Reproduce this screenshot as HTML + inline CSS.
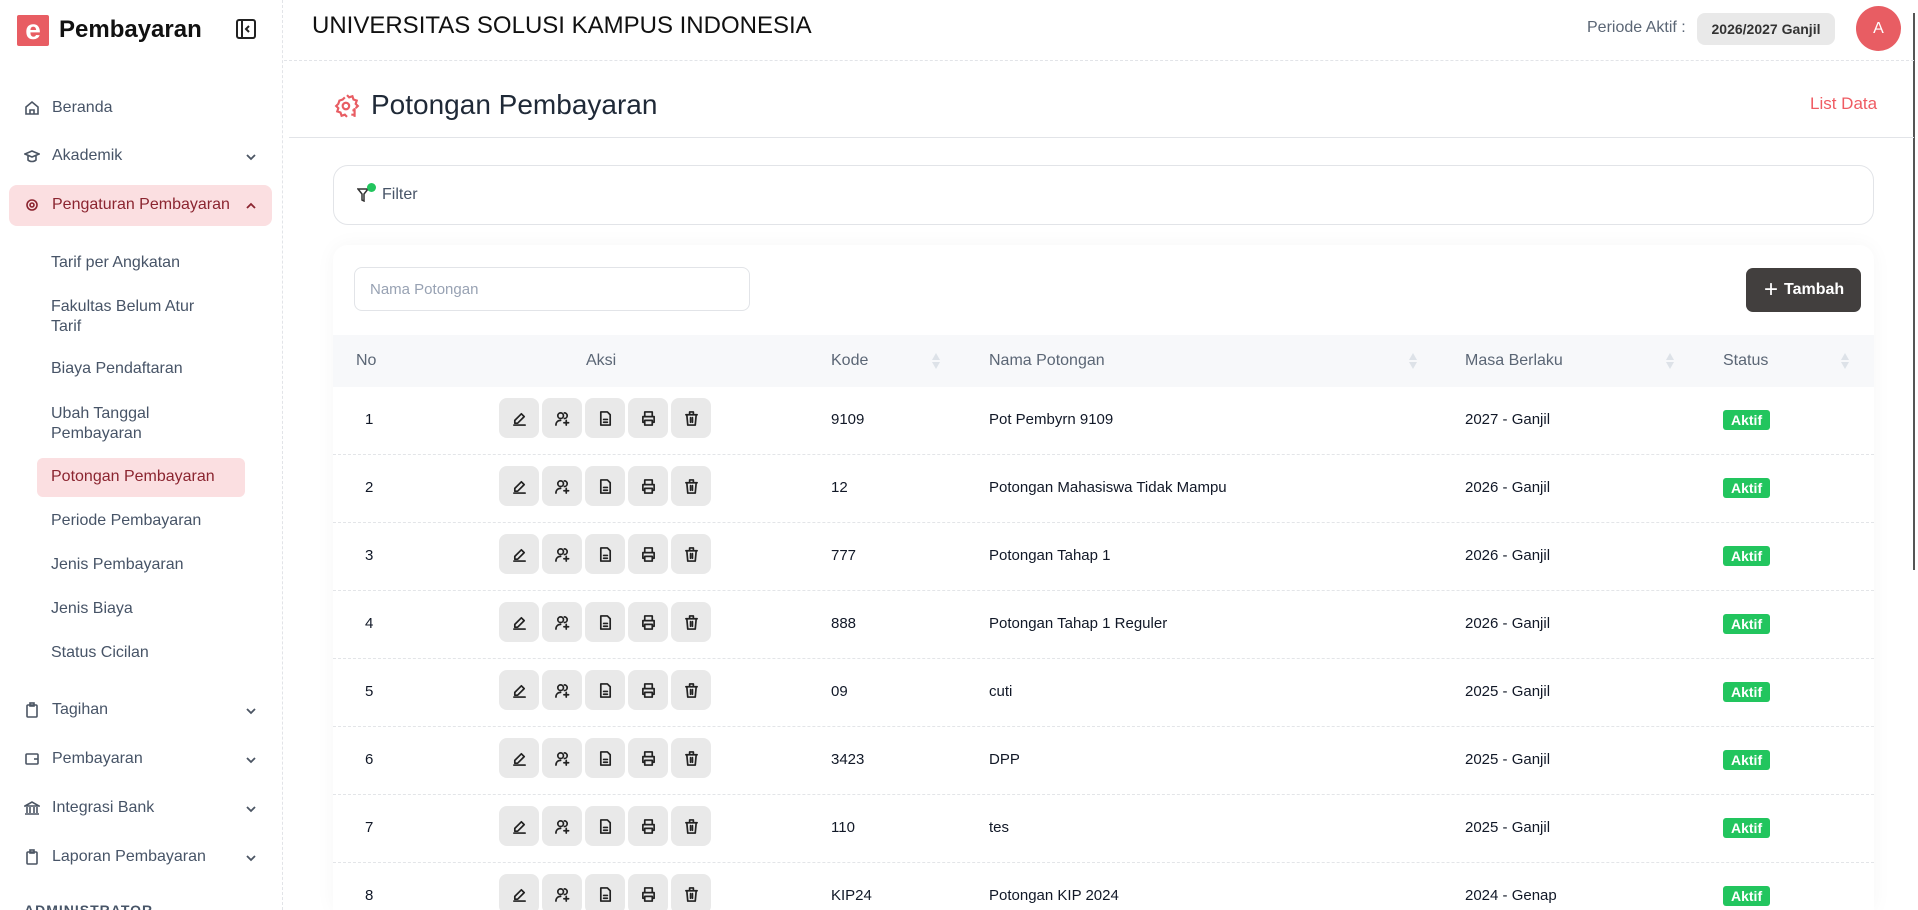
<!DOCTYPE html>
<html><head><meta charset="utf-8"><style>
*{box-sizing:border-box;margin:0;padding:0}
html,body{width:1918px;height:910px;overflow:hidden}
body{background:#fff;font-family:"Liberation Sans",sans-serif;position:relative;color:#1f2937}
.abs{position:absolute}
.side{position:absolute;left:0;top:0;width:283px;height:910px;border-right:1px dashed #e2e4e8}
.mi{position:absolute;left:24px;font-size:16px;color:#475467;display:flex;align-items:center}
.mi svg{width:16px;height:16px;margin-right:12px;stroke:#4b5563;fill:none;stroke-width:1.6}
.sub{position:absolute;left:51px;font-size:16px;color:#475467;line-height:20px}
.chev{position:absolute;left:244px;width:14px;height:14px;stroke:#4b5563;fill:none;stroke-width:1.8}
.th{position:absolute;top:352px;font-size:16px;color:#5b6675}
.sort{position:absolute;top:352px;width:10px;height:18px}
.row{position:absolute;left:333px;width:1541px;height:68px;border-bottom:1px dashed #e3e5e8}
.cell{position:absolute;top:24px;font-size:15px;color:#111827}
.btns{position:absolute;left:166px;top:11px;display:flex;gap:3px}
.btns div{width:40px;height:40px;background:#e9e9e9;border-radius:8px;display:flex;align-items:center;justify-content:center}
.btns svg{width:15px;height:15px;stroke:#222;fill:none;stroke-width:1.8;stroke-linecap:round;stroke-linejoin:round}
.badge{position:absolute;left:1390px;top:23px;background:#22c55e;color:#fff;font-weight:bold;font-size:14px;padding:2px 8px;border-radius:3px}
</style></head><body>
<div class="side">
 <div class="abs" style="left:17px;top:15px;width:32px;height:31px;background:#e85d63;border-radius:2px;color:#fff;font-weight:bold;font-size:28px;line-height:30px;text-align:center">e</div>
 <div class="abs" style="left:59px;top:16px;font-size:24px;font-weight:bold;color:#111">Pembayaran</div>
 <svg class="abs" style="left:235px;top:18px" width="22" height="22" viewBox="0 0 22 22" fill="none" stroke="#222" stroke-width="2"><rect x="2" y="2" width="18" height="18" rx="2"/><line x1="7" y1="2" x2="7" y2="20"/><path d="M14 8l-3 3 3 3"/></svg>

 <div class="mi" style="top:99px"><svg viewBox="0 0 16 16"><path d="M2 7l6-5 6 5v7H2z M6 14v-4h4v4"/></svg>Beranda</div>
 <div class="mi" style="top:147px"><svg viewBox="0 0 16 16"><path d="M1 6l7-3 7 3-7 3z M4 8v4c2 2 6 2 8 0V8"/></svg>Akademik</div>
 <svg class="chev" style="top:150px" viewBox="0 0 14 14"><path d="M3 5l4 4 4-4"/></svg>
 <div class="abs" style="left:9px;top:185px;width:263px;height:41px;background:#fbdfe1;border-radius:8px"></div>
 <div class="mi" style="top:196px;color:#8b2530"><svg viewBox="0 0 16 16" style="stroke:#8b2530"><circle cx="8" cy="8" r="5"/><circle cx="8" cy="8" r="2"/></svg>Pengaturan Pembayaran</div>
 <svg class="chev" style="top:199px;stroke:#8b2530" viewBox="0 0 14 14"><path d="M3 9l4-4 4 4"/></svg>
 <div class="sub" style="top:253px">Tarif per Angkatan</div>
 <div class="sub" style="top:297px">Fakultas Belum Atur<br>Tarif</div>
 <div class="sub" style="top:359px">Biaya Pendaftaran</div>
 <div class="sub" style="top:404px">Ubah Tanggal<br>Pembayaran</div>
 <div class="abs" style="left:37px;top:458px;width:208px;height:39px;background:#fbdfe1;border-radius:6px"></div>
 <div class="sub" style="top:467px;color:#8b2530">Potongan Pembayaran</div>
 <div class="sub" style="top:511px">Periode Pembayaran</div>
 <div class="sub" style="top:555px">Jenis Pembayaran</div>
 <div class="sub" style="top:599px">Jenis Biaya</div>
 <div class="sub" style="top:643px">Status Cicilan</div>
 <div class="mi" style="top:701px"><svg viewBox="0 0 16 16"><rect x="3" y="3" width="10" height="12" rx="1"/><rect x="6" y="1" width="4" height="3"/></svg>Tagihan</div>
 <svg class="chev" style="top:704px" viewBox="0 0 14 14"><path d="M3 5l4 4 4-4"/></svg>
 <div class="mi" style="top:750px"><svg viewBox="0 0 16 16"><rect x="2" y="3" width="12" height="10" rx="1"/><path d="M10 8h4"/></svg>Pembayaran</div>
 <svg class="chev" style="top:753px" viewBox="0 0 14 14"><path d="M3 5l4 4 4-4"/></svg>
 <div class="mi" style="top:799px"><svg viewBox="0 0 16 16"><path d="M1 6l7-4 7 4z M3 7v6 M6 7v6 M10 7v6 M13 7v6 M1 14h14"/></svg>Integrasi Bank</div>
 <svg class="chev" style="top:802px" viewBox="0 0 14 14"><path d="M3 5l4 4 4-4"/></svg>
 <div class="mi" style="top:848px"><svg viewBox="0 0 16 16"><rect x="3" y="3" width="10" height="12" rx="1"/><rect x="6" y="1" width="4" height="3"/></svg>Laporan Pembayaran</div>
 <svg class="chev" style="top:851px" viewBox="0 0 14 14"><path d="M3 5l4 4 4-4"/></svg>
 <div class="abs" style="left:24px;top:902px;font-size:14px;font-weight:bold;letter-spacing:1px;color:#475467">ADMINISTRATOR</div>
</div>

<div class="abs" style="left:312px;top:12px;font-size:24px;color:#111">UNIVERSITAS SOLUSI KAMPUS INDONESIA</div>
<div class="abs" style="left:1587px;top:19px;font-size:16px;color:#5b6675">Periode Aktif :</div>
<div class="abs" style="left:1697px;top:13px;width:138px;height:32px;background:#e9e9e9;border-radius:8px;font-size:14px;font-weight:bold;color:#333;line-height:32px;text-align:center">2026/2027 Ganjil</div>
<div class="abs" style="left:1856px;top:6px;width:45px;height:45px;border-radius:50%;background:#e85d63;color:#fff;font-size:16px;line-height:45px;text-align:center">A</div>
<div class="abs" style="left:1913px;top:13px;width:2px;height:557px;background:#555"></div>
<div class="abs" style="left:284px;top:60px;width:1630px;border-top:1px dashed #e2e4e8"></div>

<svg class="abs" style="left:334px;top:93px" width="26" height="26" viewBox="0 0 24 24" fill="none" stroke="#e85d63" stroke-width="2"><path d="M12 2l2 2 3-1 1 3 3 1-1 3 2 2-2 2M12 22l-2-2-3 1-1-3-3-1 1-3-2-2 2-2 1-3 3-1 2-2"/><circle cx="11" cy="12" r="3"/><path d="M19 14v8 M17 16h3 M16 20h3"/></svg>
<div class="abs" style="left:371px;top:89px;font-size:28px;color:#1f2937">Potongan Pembayaran</div>
<div class="abs" style="left:1810px;top:94px;font-size:17px;color:#ef5b62">List Data</div>
<div class="abs" style="left:289px;top:137px;width:1625px;border-top:1px solid #e2e4e8"></div>

<div class="abs" style="left:333px;top:165px;width:1541px;height:60px;border:1px solid #e2e4e8;border-radius:15px"></div>
<svg class="abs" style="left:357px;top:188px" width="12" height="14" viewBox="0 0 12 14" fill="none" stroke="#333" stroke-width="1.5"><path d="M1 1h10L7 6v7l-2-1V6z"/></svg>
<div class="abs" style="left:367px;top:183px;width:9px;height:9px;border-radius:50%;background:#22c55e"></div>
<div class="abs" style="left:382px;top:186px;font-size:16px;color:#475467">Filter</div>

<div class="abs" style="left:333px;top:245px;width:1541px;height:665px;border-radius:15px 15px 0 0;box-shadow:0 0 20px rgba(0,0,0,0.04)"></div>
<div class="abs" style="left:354px;top:267px;width:396px;height:44px;border:1px solid #e2e4e8;border-radius:8px;font-size:15px;color:#98a2b3;padding:13px 15px">Nama Potongan</div>
<div class="abs" style="left:1746px;top:268px;width:115px;height:44px;background:#423f3e;border-radius:7px;color:#fff;font-weight:bold;font-size:16px;line-height:44px;padding-left:18px"><span style="font-weight:normal;font-size:24px;vertical-align:-3px;margin-right:6px">+</span>Tambah</div>

<div class="abs" style="left:333px;top:335px;width:1541px;height:52px;background:#f7f8fa"></div>
<div class="th" style="left:356px">No</div>
<div class="th" style="left:586px">Aksi</div>
<div class="th" style="left:831px">Kode</div>
<div class="th" style="left:989px">Nama Potongan</div>
<div class="th" style="left:1465px">Masa Berlaku</div>
<div class="th" style="left:1723px">Status</div>
<svg class="sort" style="left:931px" viewBox="0 0 10 18" fill="#dde2e8"><path d="M5 1l4 7H1zM5 17l4-7H1z"/></svg>
<svg class="sort" style="left:1408px" viewBox="0 0 10 18" fill="#dde2e8"><path d="M5 1l4 7H1zM5 17l4-7H1z"/></svg>
<svg class="sort" style="left:1665px" viewBox="0 0 10 18" fill="#dde2e8"><path d="M5 1l4 7H1zM5 17l4-7H1z"/></svg>
<svg class="sort" style="left:1840px" viewBox="0 0 10 18" fill="#dde2e8"><path d="M5 1l4 7H1zM5 17l4-7H1z"/></svg>

<div id="rows"></div>
<script>
var d=[["1","9109","Pot Pembyrn 9109","2027 - Ganjil"],["2","12","Potongan Mahasiswa Tidak Mampu","2026 - Ganjil"],["3","777","Potongan Tahap 1","2026 - Ganjil"],["4","888","Potongan Tahap 1 Reguler","2026 - Ganjil"],["5","09","cuti","2025 - Ganjil"],["6","3423","DPP","2025 - Ganjil"],["7","110","tes","2025 - Ganjil"],["8","KIP24","Potongan KIP 2024","2024 - Genap"]];
var ic='<div><svg viewBox="0 0 16 16"><path d="M3 13h3l7-7-3-3-7 7z M2 15h12"/></svg></div><div><svg viewBox="0 0 16 16"><circle cx="6" cy="5" r="3"/><path d="M1 15c0-3 2-5 5-5 M12 10v5 M9.5 12.5h5 M10 2a3 3 0 0 1 0 6"/></svg></div><div><svg viewBox="0 0 16 16"><path d="M3 1h7l3 3v11H3z M6 9h4 M6 12h4"/></svg></div><div><svg viewBox="0 0 16 16"><path d="M4 6V1h8v5 M4 12H2V6h12v6h-2 M4 10h8v5H4z"/></svg></div><div><svg viewBox="0 0 16 16"><path d="M2 4h12 M6 4V1h4v3 M3 4l1 11h8l1-11 M7 7v5 M9 7v5"/></svg></div>';
var h="";d.forEach(function(r,i){h+='<div class="row" style="top:'+(387+i*68)+'px"><div class="cell" style="left:32px">'+r[0]+'</div><div class="btns">'+ic+'</div><div class="cell" style="left:498px">'+r[1]+'</div><div class="cell" style="left:656px">'+r[2]+'</div><div class="cell" style="left:1132px">'+r[3]+'</div><div class="badge">Aktif</div></div>'});
document.getElementById("rows").innerHTML=h;
</script>
</body></html>
